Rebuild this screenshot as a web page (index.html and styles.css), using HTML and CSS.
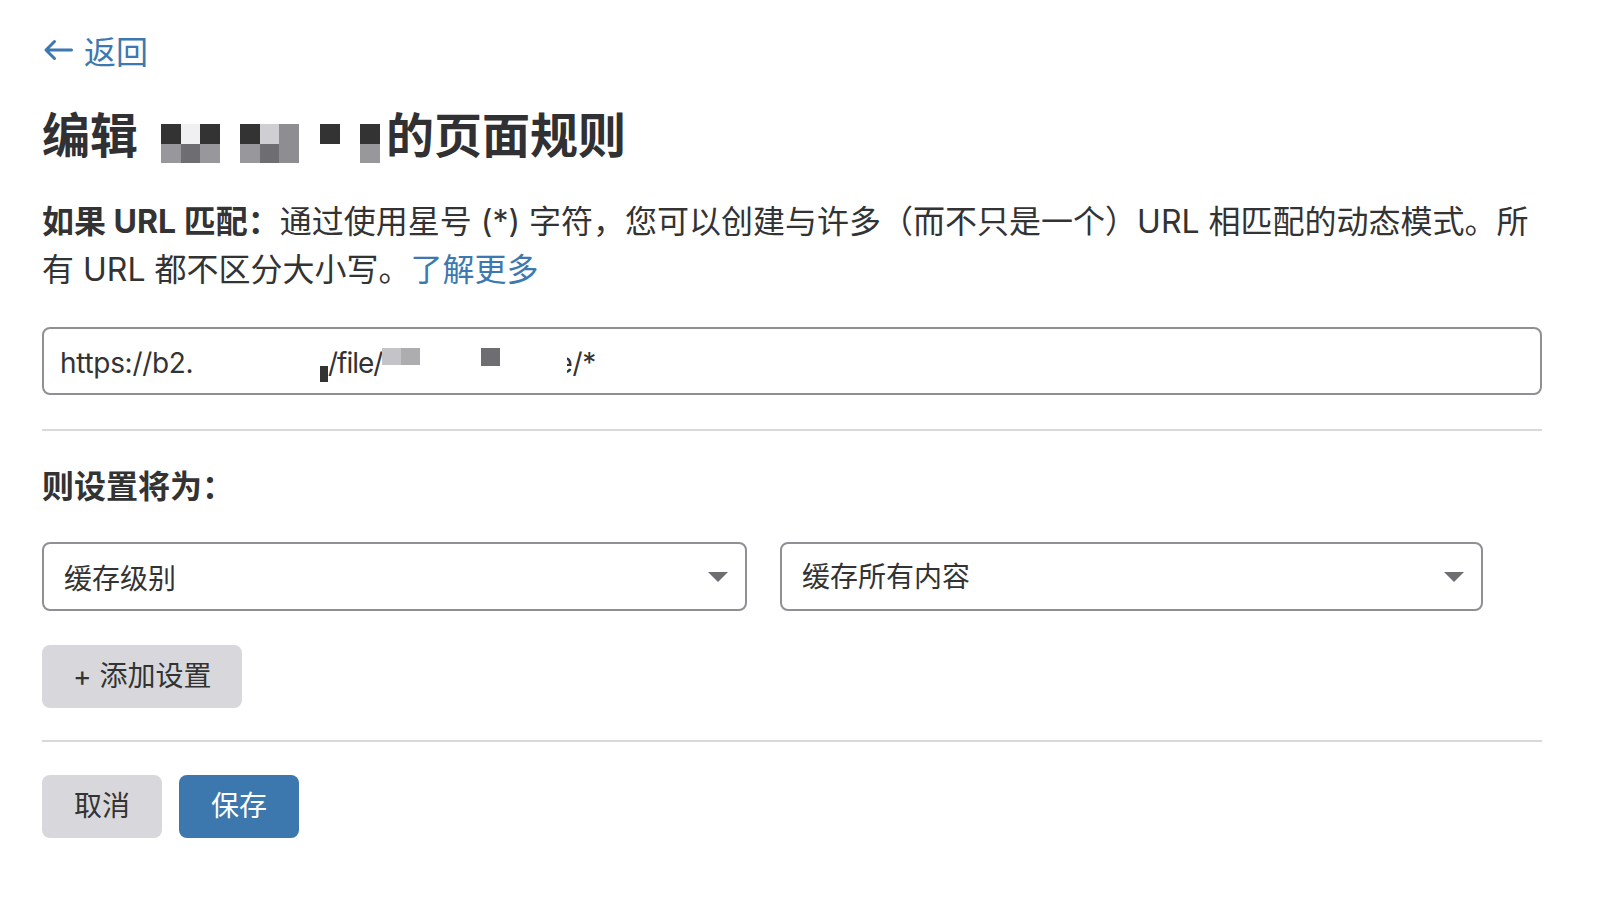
FILE: index.html
```html
<!DOCTYPE html>
<html lang="zh-CN">
<head>
<meta charset="utf-8">
<title>编辑页面规则</title>
<link rel="stylesheet" href="styles.css">
</head>
<body>
<div class="page">
  <a class="back" href="#">
    <svg class="back-icon" width="30" height="22" viewBox="0 0 30 22" aria-hidden="true">
      <path d="M28.5 11H3M11.5 2.5 3 11l8.5 8.5" fill="none" stroke="currentColor" stroke-width="3" stroke-linecap="round" stroke-linejoin="round"/>
    </svg>
    <span>返回</span>
  </a>

  <h1 class="title">编辑<span class="px px-1"><span class="cells"><i class="c1"></i><i class="c5"></i><i class="c1"></i><i class="c3"></i><i class="c4"></i><i class="c3"></i></span></span><span class="px px-2"><span class="cells"><i class="c1"></i><i class="c6"></i><i class="c7"></i><i class="c3"></i><i class="c4"></i><i class="c7"></i></span></span><span class="px px-3"><span class="cells one"><i class="c1"></i><i class="c0"></i></span></span><span class="px px-4"><span class="cells one"><i class="c1"></i><i class="c3"></i></span></span>的页面规则</h1>

  <p class="desc"><strong>如果 URL 匹配：</strong>通过使用星号 (*) 字符，您可以创建与许多（而不只是一个）URL 相匹配的动态模式。所有 URL 都不区分大小写。<a class="link" href="#">了解更多</a></p>

  <div class="field">
    <span class="seg-host">https://b2.</span><span class="mask mask-low"></span><span class="seg-path">/file/</span><span class="mask mask-a"></span><span class="mask mask-b"></span><span class="mask mask-c"></span><span class="cut">e</span><span>/*</span>
  </div>

  <div class="rule"></div>

  <h2 class="sub">则设置将为：</h2>

  <div class="settings">
    <div class="select"><span>缓存级别</span><i class="caret"></i></div>
    <div class="select select-alt"><span>缓存所有内容</span><i class="caret"></i></div>
  </div>

  <button class="btn btn-gray btn-add" type="button">+ 添加设置</button>

  <div class="rule rule-bottom"></div>

  <div class="actions">
    <button class="btn btn-gray" type="button">取消</button>
    <button class="btn btn-blue" type="button">保存</button>
  </div>
</div>
</body>
</html>
```

FILE: styles.css
```css
* {
  box-sizing: border-box;
}

html, body {
  margin: 0;
  background: #ffffff;
}

body {
  font-family: "Inter", "Noto Sans CJK SC", sans-serif;
  color: #333333;
}

.page {
  width: 1542px;
  padding: 26px 0 40px 42px;
}

/* back link */
.back {
  display: flex;
  align-items: center;
  height: 48px;
  color: #3d78b0;
  text-decoration: none;
  font-size: 32px;
}

.back-icon {
  margin-left: 1px;
  margin-right: 11px;
  flex: none;
}

/* page title */
.title {
  margin: 30px 0 0;
  font-size: 48px;
  line-height: 64px;
  font-weight: 700;
  color: #313133;
}

.px {
  display: inline-block;
  overflow: hidden;
  vertical-align: -10px;
}

.px-1 { margin-left: 23px; }
.px-2 { margin-left: 20.5px; }
.px-3 { margin-left: 21.5px; }
.px-4 { margin-left: 20.5px; margin-right: 6.5px; }

.cells {
  display: grid;
  grid-template-columns: repeat(3, 19.5px);
  grid-auto-rows: 19.5px;
}

.cells.one {
  grid-template-columns: 19.5px;
}

.cells i { display: block; }
.c0 { background: transparent; }
.c1 { background: #333333; }
.c3 { background: #98979b; }
.c4 { background: #6e6d71; }
.c5 { background: #f0eff2; }
.c6 { background: #cfced2; }
.c7 { background: #8e8d91; }

/* description */
.desc {
  margin: 30px 0 0;
  font-size: 32px;
  line-height: 48px;
  color: #333333;
}

.desc strong {
  font-weight: 700;
}

.link {
  color: #3d78b0;
  text-decoration: none;
}

/* url pattern field */
.field {
  margin-top: 33px;
  height: 68px;
  border: 2px solid #8f8f94;
  border-radius: 8px;
  padding: 4px 16px 0;
  font-size: 28px;
  line-height: 60px;
  color: #333333;
  white-space: nowrap;
  letter-spacing: -0.3px;
}

.seg-host {
  display: inline-block;
  width: 260px;
}

.seg-path {
  letter-spacing: -1px;
}

.mask {
  display: inline-block;
}

.mask-low {
  width: 8px;
  height: 16px;
  background: #333333;
  vertical-align: -9px;
}

.mask-a {
  width: 18.5px;
  height: 17.5px;
  background: #c4c3c8;
  vertical-align: 8px;
}

.mask-b {
  width: 19.5px;
  height: 17.5px;
  background: #adadb0;
  vertical-align: 8px;
}

.mask-c {
  width: 19.5px;
  height: 18.5px;
  background: #6e6d71;
  vertical-align: 7px;
  margin-left: 60.5px;
}

.cut {
  display: inline-block;
  width: 5px;
  overflow: hidden;
  direction: rtl;
  margin-left: 67px;
  vertical-align: top;
}

/* separators */
.rule {
  margin-top: 34px;
  height: 2px;
  background: #d9d9d9;
}

.rule-bottom {
  margin-top: 32px;
}

/* settings */
.sub {
  margin: 32px 0 0;
  font-size: 32px;
  line-height: 48px;
  font-weight: 700;
  color: #333333;
}

.settings {
  margin-top: 31px;
  display: grid;
  grid-template-columns: 705px 703px;
  column-gap: 33px;
}

.select {
  height: 69px;
  border: 2px solid #8f8f94;
  border-radius: 8px;
  padding: 0 17px 0 20px;
  display: flex;
  align-items: center;
  justify-content: space-between;
  font-size: 28px;
  color: #333333;
}

.select-alt span {
  margin-top: -4px;
}

.caret {
  width: 0;
  height: 0;
  border-left: 10px solid transparent;
  border-right: 10px solid transparent;
  border-top: 10px solid #6d6d72;
}

/* buttons */
.btn {
  height: 63px;
  padding: 0 32px;
  border: none;
  border-radius: 8px;
  font-family: inherit;
  font-size: 28px;
  line-height: 63px;
  cursor: pointer;
}

.btn-gray {
  background: #d8d8dc;
  color: #333333;
}

.btn-blue {
  background: #3c77ae;
  color: #ffffff;
}

.btn-add {
  display: block;
  margin-top: 34px;
  padding: 0 31px;
}

.actions {
  margin-top: 33px;
  display: flex;
  gap: 17px;
}
```
